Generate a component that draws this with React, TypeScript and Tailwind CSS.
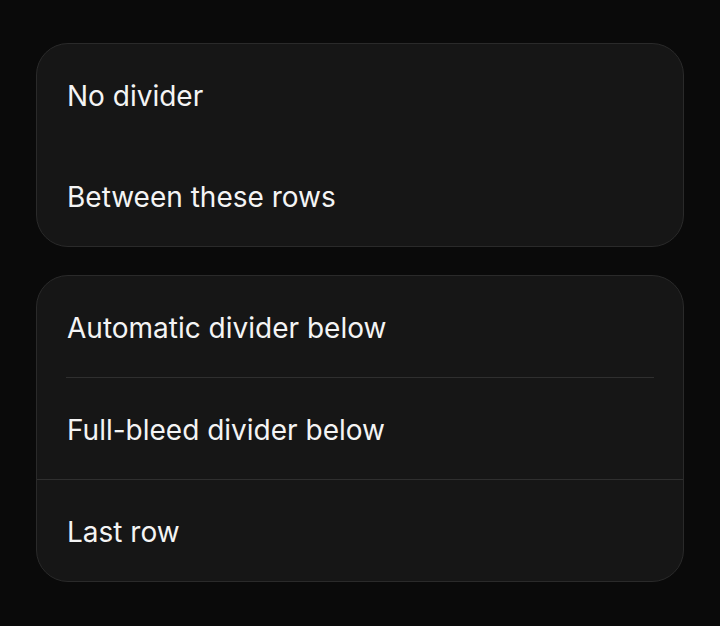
import * as React from 'react'

type Row = { label: string; divider?: 'none' | 'inset' | 'full' }

const groups: Row[][] = [
  [{ label: 'No divider' }, { label: 'Between these rows' }],
  [
    { label: 'Automatic divider below', divider: 'inset' },
    { label: 'Full-bleed divider below', divider: 'full' },
    { label: 'Last row' },
  ],
]

function ListRow({ row }: { row: Row }) {
  return (
    <div>
      <div className="flex h-[101px] items-center px-[30px] pt-[2px] text-[28px] text-[#f4f4f4]">{row.label}</div>
      {row.divider === 'inset' && <div className="mx-[29px] h-px bg-[#2f2f2f]" />}
      {row.divider === 'full' && <div className="h-px bg-[#2f2f2f]" />}
    </div>
  )
}

export default function App() {
  return (
    <div
      className="flex min-h-[626px] flex-col gap-[28px] bg-[#0a0a0a] px-[36px] pt-[43px]"
      style={{ fontFamily: 'Inter, "Noto Sans", sans-serif' }}
    >
      {groups.map((rows, i) => (
        <div key={i} className="overflow-hidden rounded-[32px] border border-[#2a2a2a] bg-[#161616]">
          {rows.map((row) => (
            <ListRow key={row.label} row={row} />
          ))}
        </div>
      ))}
    </div>
  )
}
